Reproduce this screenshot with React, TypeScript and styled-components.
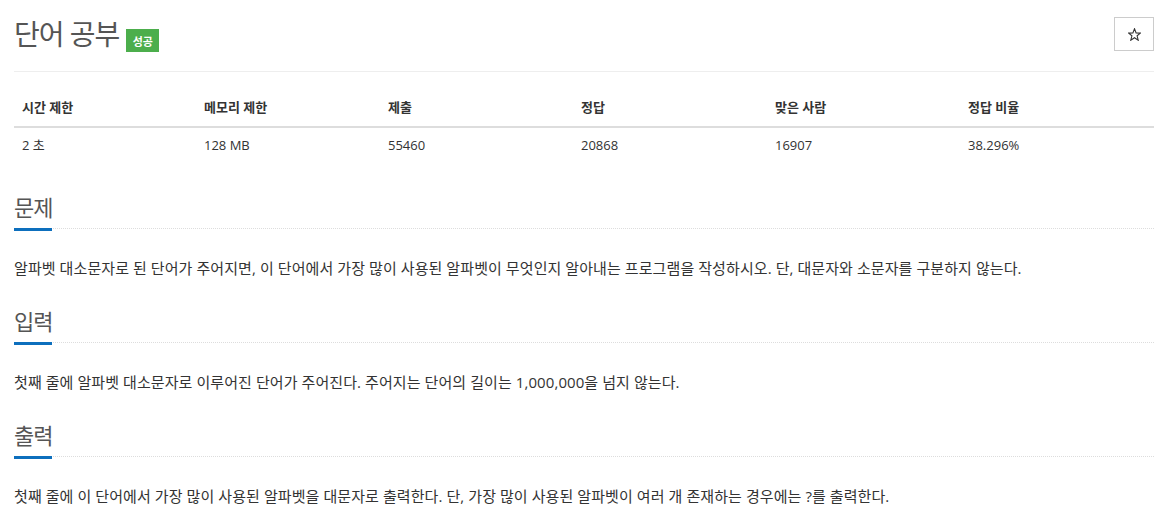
import React from 'react';
import styled, { createGlobalStyle } from 'styled-components';

const GlobalStyle = createGlobalStyle`
    body {
        margin: 0;
        background: #fff;
        font-family: "Open Sans", "Noto Sans CJK KR", sans-serif;
        color: #333;
    }
`;

const Page = styled.div`
    padding: 0 10px 0 14px;
`;

const TitleBar = styled.div`
    display: flex;
    align-items: flex-start;
    justify-content: space-between;
    padding-top: 17px;
    padding-bottom: 19px;
    border-bottom: 1px solid #eee;
`;

const TitleGroup = styled.div`
    display: flex;
    align-items: flex-start;
    gap: 7px;
`;

const Title = styled.h1`
    margin: 0;
    font-size: 28px;
    letter-spacing: -1px;
    font-weight: 400;
    line-height: 34px;
    color: #555;
`;

const Badge = styled.span`
    display: inline-flex;
    align-items: center;
    justify-content: center;
    margin-top: 12px;
    width: 33px;
    height: 23px;
    background: #4cae4c;
    color: #fff;
    font-size: 11px;
    font-weight: 700;
`;

const StarButton = styled.button`
    display: flex;
    align-items: center;
    justify-content: center;
    width: 40px;
    height: 34px;
    border: 1px solid #ccc;
    background: #fff;
    color: #333;
    padding: 0;
    cursor: pointer;
`;

const Table = styled.div`
    margin-top: 17px;
    display: grid;
    grid-template-columns: 182px 184px 193px 194px 193px 194px;
    font-size: 13px;
`;

const HeadCell = styled.div`
    padding: 9px 8px 10px;
    font-weight: 700;
    line-height: 18px;
    border-bottom: 2px solid #ddd;
`;

const Cell = styled.div`
    padding: 8px;
    line-height: 19px;
`;

const Section = styled.section<{ $first?: boolean }>`
    margin-top: ${(p) => (p.$first ? '31px' : '28px')};
`;

const SectionHead = styled.div`
    display: flex;
    border-bottom: 1px dotted #ddd;
    padding-bottom: 8px;
`;

const SectionTitle = styled.h2`
    margin: 0;
    font-size: 22px;
    letter-spacing: -1px;
    font-weight: 400;
    line-height: 26px;
    color: #555;
    position: relative;
    &::after {
        content: '';
        position: absolute;
        left: 0;
        right: 0;
        top: 34px;
        height: 3px;
        background: #0d6fbd;
    }
`;

const Paragraph = styled.p`
    margin: 27px 0 0;
    font-size: 15px;
    letter-spacing: 0.08px;
    line-height: 24px;
    color: #333;
`;

const heads = ['시간 제한', '메모리 제한', '제출', '정답', '맞은 사람', '정답 비율'];
const values = ['2 초', '128 MB', '55460', '20868', '16907', '38.296%'];

const sections = [
    { title: '문제', body: '알파벳 대소문자로 된 단어가 주어지면, 이 단어에서 가장 많이 사용된 알파벳이 무엇인지 알아내는 프로그램을 작성하시오. 단, 대문자와 소문자를 구분하지 않는다.' },
    { title: '입력', body: '첫째 줄에 알파벳 대소문자로 이루어진 단어가 주어진다. 주어지는 단어의 길이는 1,000,000을 넘지 않는다.' },
    { title: '출력', body: '첫째 줄에 이 단어에서 가장 많이 사용된 알파벳을 대문자로 출력한다. 단, 가장 많이 사용된 알파벳이 여러 개 존재하는 경우에는 ?를 출력한다.' },
];

const StarIcon = () => (
    <svg width="13" height="13" viewBox="0 0 13 13">
        <polygon
            points="6.5,0.8 8.1,4.9 12.4,5.1 9.1,7.8 10.2,12.2 6.5,9.7 2.8,12.2 3.9,7.8 0.6,5.1 4.9,4.9"
            fill="none"
            stroke="#333"
            strokeWidth="1.1"
            strokeLinejoin="miter"
        />
    </svg>
);

const App: React.FC = () => {
    return (
        <>
            <GlobalStyle />
            <Page>
                <TitleBar>
                    <TitleGroup>
                        <Title>단어 공부</Title>
                        <Badge>성공</Badge>
                    </TitleGroup>
                    <StarButton aria-label="즐겨찾기">
                        <StarIcon />
                    </StarButton>
                </TitleBar>
                <Table>
                    {heads.map((h) => <HeadCell key={h}>{h}</HeadCell>)}
                    {values.map((v) => <Cell key={v}>{v}</Cell>)}
                </Table>
                {sections.map((s, i) => (
                    <Section key={s.title} $first={i === 0}>
                        <SectionHead>
                            <SectionTitle>{s.title}</SectionTitle>
                        </SectionHead>
                        <Paragraph>{s.body}</Paragraph>
                    </Section>
                ))}
            </Page>
        </>
    );
};

export default App;
